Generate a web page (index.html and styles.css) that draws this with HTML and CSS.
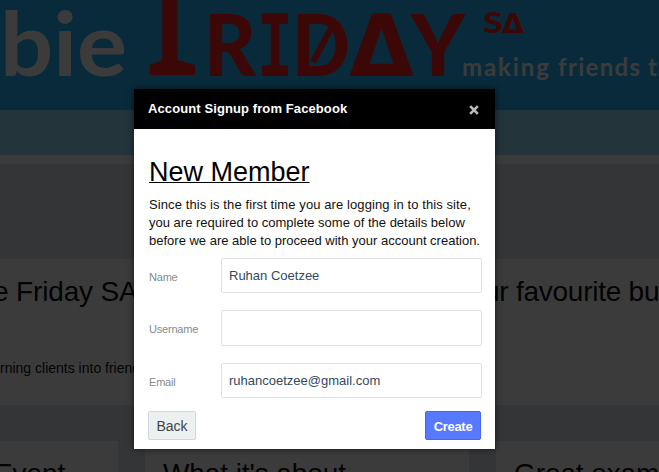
FILE: index.html
```
<!DOCTYPE html>
<html lang="en">
<head>
	<meta charset="UTF-8">
	<meta name="viewport" content="width=device-width, initial-scale=1.0">
	<title>Newbie Friday SA</title>
	<link rel="stylesheet" href="styles.css">
</head>
<body>
	<div class="page">
		<header class="banner">
			<svg class="logo" width="659" height="110" viewBox="0 0 659 110">
				<g class="logo-grey">
					<text x="0" y="76" font-size="88" textLength="127" lengthAdjust="spacingAndGlyphs">bie</text>
					<text class="tagline" x="462" y="76" font-size="24" textLength="87" lengthAdjust="spacing">making</text>
					<text class="tagline" x="558" y="76" font-size="24" textLength="82" lengthAdjust="spacing">friends</text>
					<text class="tagline" x="648" y="76" font-size="24">t</text>
				</g>
				<g class="logo-red">
					<text class="initial" transform="translate(144 75) scale(.42 1)" font-size="385">F</text>
					<text x="204" y="76" font-size="86" textLength="52" lengthAdjust="spacingAndGlyphs">R</text>
					<text class="slab" x="257" y="76" font-size="85" textLength="36" lengthAdjust="spacingAndGlyphs">I</text>
					<text x="292" y="76" font-size="86" textLength="58" lengthAdjust="spacingAndGlyphs">D</text>
					<path d="M313 62l18-34" stroke-width="6"/>
					<text class="delta" x="349" y="76" font-size="85" textLength="65" lengthAdjust="spacingAndGlyphs">Δ</text>
					<text x="411" y="76" font-size="86" textLength="54" lengthAdjust="spacingAndGlyphs">Y</text>
					<text x="483" y="33" font-size="28" textLength="20" lengthAdjust="spacingAndGlyphs">S</text>
					<text class="delta" x="502" y="33" font-size="27" textLength="22" lengthAdjust="spacingAndGlyphs">Δ</text>
				</g>
			</svg>
		</header>
		<div class="strip"></div>
		<div class="gap"></div>
		<section class="intro">
			<h1><span>e Friday SA</span><span class="tail">ur favourite business</span></h1>
			<p>rning clients into friends</p>
		</section>
		<section class="cards">
			<h2 class="card">Event</h2>
			<h2 class="card">What it's about</h2>
			<h2 class="card">Great examples</h2>
		</section>
	</div>

	<div class="overlay">
		<form class="modal">
			<div class="modal-header">
				<strong>Account Signup from Facebook</strong>
				<button type="button" class="close" aria-label="Close">
					<svg width="10" height="10" viewBox="0 0 10 10"><path d="M1.2 1.2l7.6 7.6M8.8 1.2l-7.6 7.6"/></svg>
				</button>
			</div>
			<div class="modal-body">
				<h3>New Member</h3>
				<p class="message">
					<span class="loose">Since this is the first time you are logging in to this site,</span>
					<span>you are required to complete some of the details below</span>
					<span>before we are able to proceed with your account creation.</span>
				</p>
				<div class="field">
					<label for="name">Name</label>
					<input id="name" type="text" value="Ruhan Coetzee">
				</div>
				<div class="field field-username">
					<label for="username">Username</label>
					<input id="username" type="text">
				</div>
				<div class="field">
					<label for="email">Email</label>
					<input id="email" type="text" value="ruhancoetzee@gmail.com">
				</div>
				<div class="actions">
					<button type="button" class="btn">Back</button>
					<button type="button" class="btn btn-primary">Create</button>
				</div>
			</div>
		</form>
	</div>
</body>
</html>
```
FILE: styles.css
```
* {
	box-sizing: border-box;
}

body {
	margin: 0;
	height: 472px;
	overflow: hidden;
	font-family: "Liberation Sans", Arial, sans-serif;
}

h1, h2, h3, p {
	margin: 0;
	font-weight: normal;
}

.page {
	height: 472px;
	overflow: hidden;
	background: #dfe5eb;
	color: #111;
}

.banner {
	height: 110px;
	background: #23b7f8;
}

.logo {
	display: block;
	font-family: Lato, sans-serif;
	font-weight: 900;
}

.logo-grey {
	fill: #fff;
	font-weight: 700;
}

.logo-red {
	fill: #ff2020;
}

.logo-red path {
	stroke: #ff2020;
}

.initial {
	font-family: "Liberation Serif", serif;
	font-weight: 400;
}

.slab {
	font-family: "DejaVu Sans Mono", monospace;
	font-weight: 700;
}

.delta {
	font-family: "DejaVu Sans", sans-serif;
	font-weight: 700;
}

.strip {
	height: 45px;
	background: #98defc;
}

.gap {
	height: 104px;
	border-top: 9px solid #fff;
}

.intro {
	height: 146px;
	background: #fff;
	white-space: nowrap;
}

.intro h1 {
	display: grid;
	grid-template-columns: 491px 1fr;
	padding-top: 16px;
	margin-left: -7px;
	font-size: 28px;
	line-height: 34px;
	letter-spacing: -.15px;
}

.intro .tail {
	letter-spacing: -.25px;
}

.intro p {
	padding-top: 50px;
	font-size: 14px;
	line-height: 18px;
}

.cards {
	display: grid;
	grid-template-columns: 118px 324px 324px;
	gap: 27px;
	padding-top: 36px;
}

.card {
	height: 60px;
	padding: 17px 18px;
	background: #fff;
	font-size: 28px;
	line-height: 32px;
	letter-spacing: -.1px;
	white-space: nowrap;
}

.card:first-child {
	padding-left: 0;
	text-indent: -6px;
}

.overlay {
	position: absolute;
	inset: 0;
	padding: 89px 0 0 134px;
	background: rgba(0, 0, 0, .77);
}

.modal {
	width: 361px;
	height: 360px;
	background: #fff;
	box-shadow: 0 0 6px rgba(0, 0, 0, .6);
	color: #111;
}

.modal-header {
	display: flex;
	align-items: center;
	justify-content: space-between;
	height: 40px;
	padding: 0 16px 2px 14px;
	background: #000;
	color: #fff;
	font-size: 13px;
	letter-spacing: .1px;
}

.close {
	display: flex;
	padding: 3px 0 0;
	border: 0;
	background: none;
}

.close path {
	stroke: #bbb;
	stroke-width: 2.6;
}

.modal-body {
	padding: 26px 13px 0 15px;
}

h3 {
	color: #000;
	font-size: 27px;
	line-height: 34px;
	text-decoration: underline;
	text-decoration-thickness: 1px;
}

.message {
	margin: 7px 0 8px;
	font-size: 13px;
	line-height: 18px;
	white-space: nowrap;
}

.message span {
	display: block;
}

.message .loose {
	letter-spacing: .1px;
}

.field {
	display: flex;
	align-items: center;
	height: 35px;
	margin-bottom: 17px;
}

.field-username {
	height: 36px;
}

.field label {
	width: 72px;
	padding-top: 3px;
	color: #7f8c8d;
	font-size: 11px;
	letter-spacing: -.2px;
}

.field-username label {
	padding-top: 2px;
}

.field input {
	width: 261px;
	height: 100%;
	padding: 0 7px;
	border: 1px solid #dfe1e2;
	border-radius: 2px;
	color: #34495e;
	font: 13px "Liberation Sans", Arial, sans-serif;
}

.actions {
	display: flex;
	justify-content: space-between;
	margin: -4px 1px 0 -1px;
}

.btn {
	width: 48px;
	height: 29px;
	padding: 1px 0 0;
	border: 1px solid #d0d6d8;
	border-radius: 2px;
	background: #ecf0f1;
	color: #444;
	font: 14px "Liberation Sans", Arial, sans-serif;
}

.btn-primary {
	width: 56px;
	border-color: #4567ed;
	background: #5679ff;
	color: #fff;
	font-size: 13px;
	font-weight: bold;
	letter-spacing: -.3px;
}
```
